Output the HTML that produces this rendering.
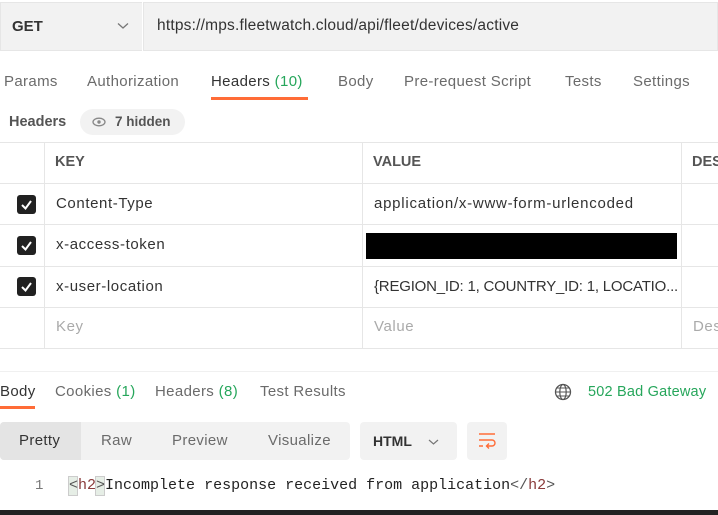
<!DOCTYPE html>
<html><head><style>
*{margin:0;padding:0;box-sizing:border-box}
body{width:718px;height:515px;background:#fff;font-family:"Liberation Sans",Arial,sans-serif;font-size:14px;color:#212121;position:relative;overflow:hidden}
.a{position:absolute;white-space:nowrap}
.g{color:#6b6b6b}
.t{font-size:15px;letter-spacing:0.35px}
.c{font-size:15px;letter-spacing:0.6px}
.hl{position:absolute;background:#e6e6e6;height:1px}
.vl{position:absolute;background:#e6e6e6;width:1px}
.cb{position:absolute;left:17px;width:19px;height:19px;background:#212121;border-radius:3px}
.cb svg{position:absolute;left:3px;top:3px}
.grn{color:#26a65b}
</style></head><body>
<div class="a" style="left:0;top:2px;width:142px;height:49px;background:#f2f2f2;border:1px solid #e6e6e6;border-right:none"></div>
<div class="a" style="left:143px;top:2px;width:575px;height:49px;background:#f2f2f2;border:1px solid #e6e6e6"></div>
<div class="a" style="left:12px;top:18px;font-weight:bold;font-size:15px;color:#333">GET</div>
<svg class="a" style="left:117px;top:22px" width="12" height="8"><path d="M1 1.5L6 6L11 1.5" stroke="#777" stroke-width="1.3" fill="none"/></svg>
<div class="a" style="left:157px;top:17px;font-size:15.5px;color:#333;letter-spacing:0.2px">https://mps.fleetwatch.cloud/api/fleet/devices/active</div>

<div class="a g t" style="left:4px;top:73px">Params</div>
<div class="a g t" style="left:87px;top:73px">Authorization</div>
<div class="a t" style="left:211px;top:73px;color:#333">Headers <span class="grn">(10)</span></div>
<div class="a" style="left:211px;top:97px;width:97px;height:3px;background:#ff6c37"></div>
<div class="a g t" style="left:338px;top:73px">Body</div>
<div class="a g t" style="left:404px;top:73px">Pre-request Script</div>
<div class="a g t" style="left:565px;top:73px">Tests</div>
<div class="a g t" style="left:633px;top:73px">Settings</div>

<div class="a" style="left:9px;top:114px;font-weight:bold;color:#555;font-size:14.5px">Headers</div>
<div class="a" style="left:80px;top:109px;width:105px;height:26px;background:#f2f2f2;border-radius:13px"></div>
<svg class="a" style="left:92px;top:117px" width="14" height="10"><ellipse cx="7" cy="5" rx="6" ry="3.8" stroke="#888" stroke-width="1.3" fill="none"/><circle cx="7" cy="5" r="1.7" fill="#888"/></svg>
<div class="a" style="left:115px;top:114px;font-weight:bold;color:#555;font-size:13.5px">7 hidden</div>

<div class="hl" style="left:0;top:142px;width:718px"></div>
<div class="hl" style="left:0;top:183px;width:718px"></div>
<div class="hl" style="left:0;top:224px;width:718px"></div>
<div class="hl" style="left:0;top:266px;width:718px"></div>
<div class="hl" style="left:0;top:307px;width:718px"></div>
<div class="hl" style="left:0;top:348px;width:718px"></div>
<div class="vl" style="left:44px;top:142px;height:207px"></div>
<div class="vl" style="left:362px;top:142px;height:207px"></div>
<div class="vl" style="left:681px;top:142px;height:207px"></div>
<div class="a" style="left:55px;top:154px;font-weight:bold;color:#555;font-size:14.5px">KEY</div>
<div class="a" style="left:373px;top:154px;font-weight:bold;color:#555;font-size:14.5px">VALUE</div>
<div class="a" style="left:692px;top:154px;font-weight:bold;color:#555;font-size:14.5px">DESC</div>

<div class="cb" style="top:195px"><svg width="13" height="13"><path d="M2 7L5.5 10.5L11 3" stroke="#fff" stroke-width="2" fill="none"/></svg></div>
<div class="cb" style="top:236px"><svg width="13" height="13"><path d="M2 7L5.5 10.5L11 3" stroke="#fff" stroke-width="2" fill="none"/></svg></div>
<div class="cb" style="top:277px"><svg width="13" height="13"><path d="M2 7L5.5 10.5L11 3" stroke="#fff" stroke-width="2" fill="none"/></svg></div>
<div class="a c" style="left:56px;top:195px;color:#333">Content-Type</div>
<div class="a c" style="left:56px;top:236px;color:#333">x-access-token</div>
<div class="a c" style="left:56px;top:278px;color:#333">x-user-location</div>
<div class="a c" style="left:56px;top:318px;color:#aaa">Key</div>
<div class="a c" style="left:374px;top:195px;color:#333;letter-spacing:0.75px">application/x-www-form-urlencoded</div>
<div class="a" style="left:366px;top:233px;width:311px;height:26px;background:#000"></div>
<div class="a c" style="left:374px;top:278px;color:#333;letter-spacing:-0.2px">{REGION_ID: 1, COUNTRY_ID: 1, LOCATIO...</div>
<div class="a c" style="left:374px;top:318px;color:#aaa">Value</div>
<div class="a c" style="left:693px;top:318px;color:#aaa">Des</div>

<div class="hl" style="left:0;top:371px;width:718px;background:#f0f0f0"></div>
<div class="a t" style="left:0;top:383px;color:#333">Body</div>
<div class="a" style="left:0;top:406px;width:35px;height:3px;background:#ff6c37"></div>
<div class="a g t" style="left:55px;top:383px">Cookies <span class="grn">(1)</span></div>
<div class="a g t" style="left:155px;top:383px">Headers <span class="grn">(8)</span></div>
<div class="a g t" style="left:260px;top:383px">Test Results</div>
<svg class="a" style="left:554px;top:383px" width="18" height="18"><circle cx="9" cy="9" r="7.5" stroke="#555" stroke-width="1.3" fill="none"/><ellipse cx="9" cy="9" rx="3.2" ry="7.5" stroke="#555" stroke-width="1.2" fill="none"/><path d="M1.5 9H16.5M3 5H15M3 13H15" stroke="#555" stroke-width="1.1"/></svg>
<div class="a grn" style="left:588px;top:384px;font-size:14.5px;letter-spacing:0.2px">502 Bad Gateway</div>

<div class="a" style="left:0;top:422px;width:350px;height:38px;background:#f2f2f2;border-radius:4px"></div>
<div class="a" style="left:0;top:422px;width:81px;height:38px;background:#e4e4e4;border-radius:4px 0 0 4px"></div>
<div class="a t" style="left:19px;top:432px;color:#333">Pretty</div>
<div class="a g t" style="left:101px;top:432px">Raw</div>
<div class="a g t" style="left:172px;top:432px">Preview</div>
<div class="a g t" style="left:268px;top:432px">Visualize</div>
<div class="a" style="left:360px;top:422px;width:97px;height:38px;background:#f2f2f2;border-radius:4px"></div>
<div class="a" style="left:373px;top:433px;font-weight:bold;color:#333;font-size:14px">HTML</div>
<svg class="a" style="left:428px;top:439px" width="11" height="7"><path d="M1 1L5.5 5L10 1" stroke="#777" stroke-width="1.2" fill="none"/></svg>
<div class="a" style="left:467px;top:422px;width:40px;height:38px;background:#f2f2f2;border-radius:4px"></div>
<svg class="a" style="left:477px;top:432px" width="20" height="18"><path d="M2 2H18M2 8H15a3 3 0 0 1 0 6H10M12 11.5L9.5 14L12 16.5M2 14H6" stroke="#ff6c37" stroke-width="1.4" fill="none"/></svg>

<div class="a" style="left:35px;top:478px;font-family:'Liberation Mono',monospace;font-size:14px;color:#777">1</div>
<div class="a" style="left:68px;top:476px;width:10px;height:20px;background:#e6eee6;border:1px solid #ccc"></div>
<div class="a" style="left:95px;top:476px;width:10px;height:20px;background:#e6eee6;border:1px solid #ccc"></div>
<div class="a" style="left:69px;top:477px;font-family:'Liberation Mono',monospace;font-size:15px;color:#222"><span style="color:#555">&lt;</span><span style="color:#8a3b3b">h2</span><span style="color:#555">&gt;</span>Incomplete response received from application<span style="color:#555">&lt;/</span><span style="color:#8a3b3b">h2</span><span style="color:#555">&gt;</span></div>
<div class="a" style="left:0;top:510px;width:718px;height:5px;background:#222"></div>
</body></html>
